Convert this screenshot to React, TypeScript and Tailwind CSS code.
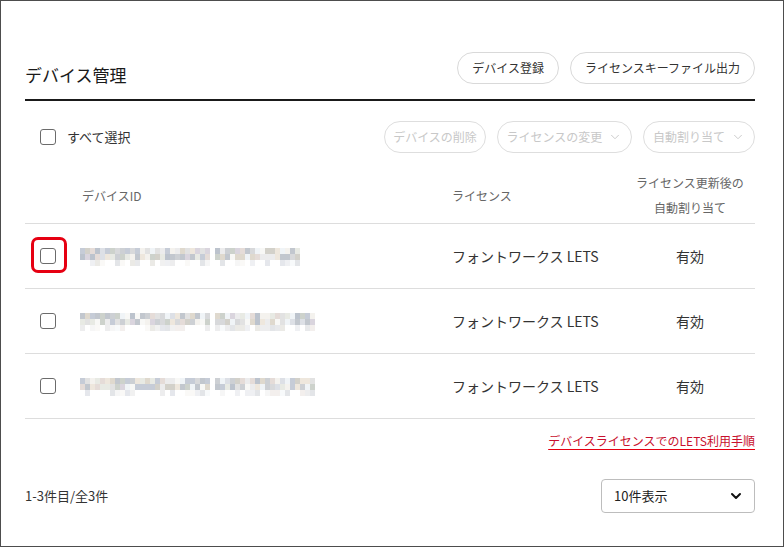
import React from 'react';
import { ChevronDown } from 'lucide-react';

const palette = [
  '#ececed', '#e2e2e2', '#d8d9db', '#cdd0d4', '#f4f2ee', '#e5dcd8', '#c6ccd7',
  '#dde0e6', '#f0f4f7', '#d3d1ca', '#c2c7ce', '#e8eae4', '#dad5de', '#f8f8f6',
  '#cdd2cc', '#bcc3cd', '#eee7dd', '#dfd9ce',
];

// deterministic pseudo random so the mosaic looks the same each render
const rand = (seed: number) => {
  const x = Math.sin(seed * 9301 + 49297) * 233280;
  return x - Math.floor(x);
};

const Mosaic: React.FC<{ seed: number; first: number; second: number }> = ({ seed, first, second }) => {
  const rows = [0, 1, 2];
  return (
    <div className="flex flex-col">
      {rows.map((r) => (
        <div key={r} className="flex h-[6px]" style={{ opacity: r === 2 ? 0.45 : 1 }}>
          {Array.from({ length: first + second + 1 }).map((_, i) => {
            const isGap = i === first;
            const v = rand(seed * 1000 + r * 100 + i);
            const color = isGap ? 'transparent' : r === 2 && v > 0.6 ? 'transparent' : palette[Math.floor(v * palette.length)];
            return <span key={i} className="w-[5px] h-[6px]" style={{ backgroundColor: color }} />;
          })}
        </div>
      ))}
    </div>
  );
};

const Checkbox: React.FC = () => (
  <span className="block w-4 h-4 rounded-[3px] border-[1.5px] border-[#6b6b6b] bg-white" />
);

const rows = [
  { seed: 1, first: 26, second: 17, highlight: true },
  { seed: 2, first: 26, second: 20, highlight: false },
  { seed: 3, first: 26, second: 20, highlight: false },
];

const App: React.FC = () => {
  return (
    <div className="w-[784px] h-[547px] border border-[#4d4d4d] bg-white pl-6 pr-7 pt-[51px] text-[#333] font-['Noto_Sans_CJK_JP','Noto_Sans',sans-serif]">
      {/* Header */}
      <div className="flex justify-between items-start pb-[15px] border-b-2 border-[#1a1a1a]">
        <h1 className="mt-[13px] text-[17px] leading-[19px] text-[#1a1a1a]">デバイス管理</h1>
        <div className="flex gap-[11px]">
          <button className="h-8 px-[14px] rounded-full border border-[#d9d9d9] text-[12px] text-[#333]">デバイス登録</button>
          <button className="h-8 px-[14px] rounded-full border border-[#d9d9d9] text-[12px] text-[#333]">ライセンスキーファイル出力</button>
        </div>
      </div>

      {/* Toolbar */}
      <div className="mt-5 h-8 flex items-center justify-between">
        <label className="pl-[15px] flex items-center gap-[11px] text-[13px] text-[#333]">
          <Checkbox />
          すべて選択
        </label>
        <div className="flex gap-[11px]">
          <button disabled className="h-8 w-[102px] rounded-full border border-[#dedede] text-[12px] text-[#c8c8c8] flex items-center justify-center">デバイスの削除</button>
          <button disabled className="h-8 w-[135px] rounded-full border border-[#dedede] text-[12px] text-[#c8c8c8] flex items-center justify-center gap-[6px]">
            ライセンスの変更
            <ChevronDown size={14} strokeWidth={1.6} className="text-[#c8c8c8]" />
          </button>
          <button disabled className="h-8 w-[112px] rounded-full border border-[#dedede] text-[12px] text-[#c8c8c8] flex items-center justify-center gap-[6px]">
            自動割り当て
            <ChevronDown size={14} strokeWidth={1.6} className="text-[#c8c8c8]" />
          </button>
        </div>
      </div>

      {/* Table */}
      <div className="grid grid-cols-[55px_372px_173px_130px] items-center pt-[17px] pb-[3px] border-b border-[#dddddd] text-[12px] text-[#666]">
        <div />
        <div className="pl-[2px] leading-[25px]">デバイスID</div>
        <div className="leading-[25px]">ライセンス</div>
        <div className="text-center leading-[25px]">
          ライセンス更新後の
          <br />
          自動割り当て
        </div>
      </div>
      {rows.map((row) => (
        <div key={row.seed} className="grid grid-cols-[55px_372px_173px_130px] items-center h-[65px] border-b border-[#dddddd]">
          <div className="pl-[15px]">
            <span className="relative block w-4 h-4">
              <Checkbox />
              {row.highlight && (
                <span className="absolute -left-[9px] -top-[11px] w-[36px] h-[36px] rounded-[7px] border-[3px] border-[#e60012]" />
              )}
            </span>
          </div>
          <div className="pt-[2px]">
            <Mosaic seed={row.seed} first={row.first} second={row.second} />
          </div>
          <div className="text-[14px] text-[#333]">フォントワークス LETS</div>
          <div className="text-center text-[14px] text-[#333]">有効</div>
        </div>
      ))}

      {/* Link */}
      <div className="mt-[13px] flex justify-end">
        <a href="#" className="text-[12px] leading-[18px] text-[#c8102e] underline decoration-[#e60012] underline-offset-[3px]">
          デバイスライセンスでのLETS利用手順
        </a>
      </div>

      {/* Footer */}
      <div className="mt-[29px] flex justify-between items-center">
        <span className="text-[13px] text-[#333]">1-3件目/全3件</span>
        <div className="w-[154px] h-[34px] border border-[#bdbdbd] rounded-[4px] pl-3 pr-[10px] flex items-center justify-between text-[13px] text-[#222]">
          10件表示
          <ChevronDown size={16} strokeWidth={3} className="text-[#111]" />
        </div>
      </div>
    </div>
  );
};

export default App;
